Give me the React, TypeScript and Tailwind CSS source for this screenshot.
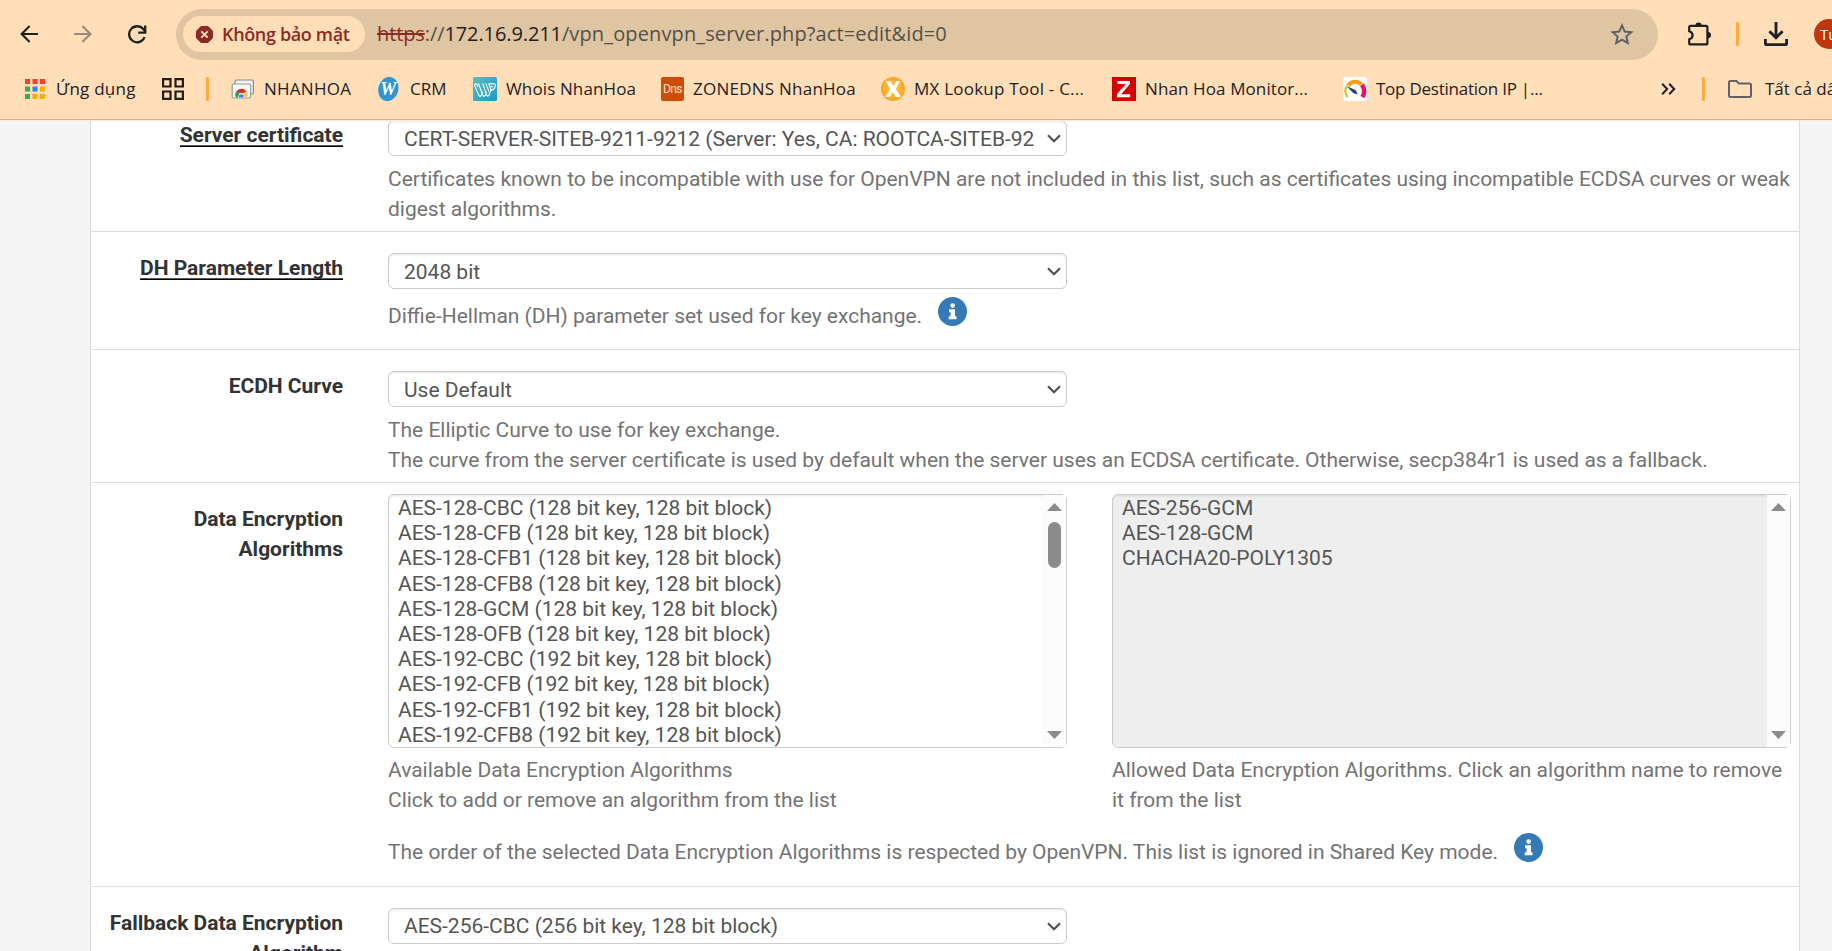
import type { ReactNode } from "react";

const ALGORITHMS = [
  "AES-128-CBC (128 bit key, 128 bit block)",
  "AES-128-CFB (128 bit key, 128 bit block)",
  "AES-128-CFB1 (128 bit key, 128 bit block)",
  "AES-128-CFB8 (128 bit key, 128 bit block)",
  "AES-128-GCM (128 bit key, 128 bit block)",
  "AES-128-OFB (128 bit key, 128 bit block)",
  "AES-192-CBC (192 bit key, 128 bit block)",
  "AES-192-CFB (192 bit key, 128 bit block)",
  "AES-192-CFB1 (192 bit key, 128 bit block)",
  "AES-192-CFB8 (192 bit key, 128 bit block)",
];

const ALLOWED = ["AES-256-GCM", "AES-128-GCM", "CHACHA20-POLY1305"];

/* ---------- toolbar icons ---------- */

function BackIcon() {
  return (
    <svg className="h-[18px] w-[18px] shrink-0" viewBox="0 0 18 18" fill="none" stroke="#1f1f1f" strokeWidth="2.1">
      <path d="M18 9H1.8M9.6 1L1.6 9l8 8" />
    </svg>
  );
}

function ForwardIcon() {
  return (
    <svg className="h-[18px] w-[18px] shrink-0" viewBox="0 0 18 18" fill="none" stroke="#9a8a75" strokeWidth="2.1">
      <path d="M0 9h16.2M8.4 1l8 8-8 8" />
    </svg>
  );
}

function ReloadIcon() {
  return (
    <svg className="h-[19px] w-[19px] shrink-0" viewBox="0 0 19 19" fill="none" stroke="#1f1f1f" strokeWidth="2.3">
      <path d="M16.6 12.2A8 8 0 1 1 15.2 4l2 2.4" />
      <path d="M17.2 .6v7h-7" />
    </svg>
  );
}

function DangerIcon() {
  return (
    <svg className="h-[17px] w-[17px] shrink-0" viewBox="0 0 17 17">
      <path d="M5 0h7l5 5v7l-5 5H5l-5-5V5z" fill="#8c2a25" />
      <path d="M5.3 5.3l6.4 6.4M11.7 5.3l-6.4 6.4" stroke="#ffdeb8" strokeWidth="1.8" />
    </svg>
  );
}

function StarIcon() {
  return (
    <svg className="h-[22px] w-[24px] shrink-0" viewBox="0 0 24 22" fill="none" stroke="#5f6064" strokeWidth="2">
      <path d="M12 2.4l2.7 6.2 6.6.6-5 4.4 1.5 6.4-5.8-3.4-5.8 3.4 1.5-6.4-5-4.4 6.6-.6z" />
    </svg>
  );
}

function PuzzleIcon() {
  return (
    <svg className="h-[25px] w-[26px] shrink-0" viewBox="0 0 26 25">
      <path
        d="M4.700 3.800h15.200q1.500 0 1.500 1.500v15.600q0 1.500-1.500 1.500H4.700q-1.500 0-1.500-1.500v-3.500q3.400-1 3.400-4.100t-3.400-4.100v-3.900q0-1.500 1.500-1.500z"
        fill="none"
        stroke="#1f1f1f"
        strokeWidth="2.200"
      />
      <path d="M9.300 3.600a3.200 3.200 0 0 1 6.400 0zM21.800 9.900a3.200 3.200 0 0 1 0 6.400z" fill="#1f1f1f" />
    </svg>
  );
}

function DownloadIcon() {
  return (
    <svg className="h-[24px] w-[24px] shrink-0" viewBox="0 0 24 24" fill="none" stroke="#1f2023" strokeWidth="2.8">
      <path d="M12 0v15.500M5.400 9.200l6.600 6.600 6.600-6.600" />
      <path d="M1.400 17v4.200q0 1.400 1.400 1.400h18.400q1.400 0 1.400-1.400V17" />
    </svg>
  );
}

function Separator() {
  return <div className="h-6 w-[3px] shrink-0 rounded-[1px] bg-[#ffab40]" />;
}

/* ---------- bookmark icons ---------- */

function AppsIcon() {
  return (
    <svg className="h-5 w-5 shrink-0" viewBox="0 0 20 20">
      <path d="M0 0h5v5H0zM7.500 0h5v5h-5zM15 0h5v5h-5z" fill="#f6402f" />
      <path d="M0 7.500h5v5H0zM0 15h5v5H0z" fill="#3aa757" />
      <path d="M7.500 7.500h5v5h-5z" fill="#1e88f5" />
      <path d="M15 7.500h5v5h-5zM7.500 15h5v5h-5zM15 15h5v5h-5z" fill="#f9ab00" />
    </svg>
  );
}

function GridIcon() {
  return (
    <svg className="h-[22px] w-[22px] shrink-0" viewBox="0 0 22 22" fill="none" stroke="#1f1f1f" strokeWidth="2.200">
      <path d="M1.100 1.100h7.400v7.400H1.100zM13.500 1.100h7.400v7.400h-7.400zM1.100 13.500h7.400v7.400H1.100zM13.500 13.500h7.400v7.400h-7.400z" />
    </svg>
  );
}

function NhanHoaIcon() {
  return (
    <svg className="h-6 w-6 shrink-0" viewBox="0 0 24 24">
      <rect x="4" y="3" width="18.400" height="14" rx="1.500" fill="#f1f1f1" stroke="#8a8a8a" strokeWidth="1.200" />
      <rect x="1.200" y="7" width="18.400" height="14" rx="1.500" fill="#f7f7f7" stroke="#9a9a9a" strokeWidth="1.200" />
      <path d="M4.900 20.600a5.600 5.600 0 0 1 1.600-7l2.800 5.200v1.800z" fill="#2f9e4f" />
      <path d="M5.400 14.700a6 6 0 0 1 10.200-.2L10.400 17z" fill="#d93025" />
      <path d="M10.400 16h5.800a6 6 0 0 1 0 4.600h-4z" fill="#fbc530" />
      <path d="M7.400 20.600a3.200 3.200 0 1 1 6 0z" fill="#fff" />
      <path d="M8.200 20.600a2.400 2.400 0 1 1 4.400 0z" fill="#3b82f0" />
    </svg>
  );
}

function CrmIcon() {
  return (
    <svg className="h-6 w-6 shrink-0" viewBox="0 0 24 24">
      <ellipse cx="11.300" cy="12" rx="10" ry="12.200" transform="rotate(14 11.300 12)" fill="#3096ce" />
      <text
        x="11.300"
        y="17.800"
        textAnchor="middle"
        fontFamily="Liberation Serif, serif"
        fontStyle="italic"
        fontWeight="700"
        fontSize="18"
        fill="#fff"
      >
        W
      </text>
    </svg>
  );
}

function WhoisIcon() {
  return (
    <svg className="h-6 w-6 shrink-0" viewBox="0 0 24 24">
      <defs>
        <linearGradient id="whois" x1="0" y1="0" x2="1" y2="1">
          <stop offset="0" stopColor="#55c0ba" />
          <stop offset="0.500" stopColor="#37acc8" />
          <stop offset="1" stopColor="#1c9ac6" />
        </linearGradient>
      </defs>
      <rect width="24" height="24" rx="1.500" fill="url(#whois)" />
      <g fill="none" stroke="#fff" strokeWidth="1.150" strokeLinejoin="round" strokeLinecap="round">
        <path d="M4.800 9.400Q4 6.800 2.600 6.800T1.600 8.400l4.200 10q1.200 2 2.400 0l1.200-3.400" />
        <path d="M5.400 6.800l4.600 11.600q1 1.800 2.200 0l1.200-3.200M9.800 6.800l3.800 11.200q1.200 2.200 2.400 0l1.800-4.600" />
        <path d="M13 6.800l2.800 7.400M15.800 6.800h5.400q1.600.4 1 2.600-.8 3.400-4 4l-2.400-6.600M18.200 9.600h1.600" />
      </g>
    </svg>
  );
}

function DnsIcon() {
  return (
    <div className="flex h-6 w-[23px] shrink-0 items-center justify-center rounded-[2px] bg-[#d04c05] font-['Roboto',sans-serif] text-[12px] tracking-[-0.6px] text-[#ffe5d2]">
      Dns
    </div>
  );
}

function MxIcon() {
  return (
    <svg className="h-6 w-6 shrink-0" viewBox="0 0 24 24">
      <defs>
        <radialGradient id="mx">
          <stop offset="0.300" stopColor="#ffc050" />
          <stop offset="1" stopColor="#fca31c" />
        </radialGradient>
      </defs>
      <circle cx="12" cy="12" r="12" fill="url(#mx)" />
      <path d="M4.500 4h4.800l3 5 3-5H19.500l-4.900 8L20 20h-5l-3.200-5.300L8.600 20H4.200l5.300-8z" fill="#fff" />
    </svg>
  );
}

function ZabbixIcon() {
  return (
    <svg className="h-6 w-6 shrink-0" viewBox="0 0 24 24">
      <rect width="24" height="24" fill="#d40000" />
      <path d="M5.500 4H18v3L9.200 17.200h9v3H5V17l8.800-10H5.500z" fill="#fff" />
    </svg>
  );
}

function GaugeIcon() {
  return (
    <svg className="h-6 w-6 shrink-0" viewBox="0 0 24 24" fill="none">
      <rect width="24" height="24" rx="3" fill="#fff" />
      <path d="M4.600 20.200C1.800 16.500 1.800 12 4.200 8.600" stroke="#b2d235" strokeWidth="2.200" />
      <path d="M5 8.800C8 4 15 3.400 18.500 7.600" stroke="#f99d1c" strokeWidth="4" />
      <path d="M19 7.800c2.600 3.800 2.600 8.600.4 12.400" stroke="#ed1063" strokeWidth="4.600" />
      <path d="M5 10.200l7.400 3.200 1.800 3.600-4-1.400z" fill="#1f3a63" stroke="#1f3a63" strokeWidth=".8" />
    </svg>
  );
}

function ChevronsIcon() {
  return (
    <svg className="h-3 w-[15px] shrink-0" viewBox="0 0 15 12" fill="none" stroke="#1f1f1f" strokeWidth="2">
      <path d="M1.200.8L6.200 6l-5 5.200M8.200.8l5 5.200-5 5.200" />
    </svg>
  );
}

function FolderIcon() {
  return (
    <svg className="h-[18px] w-6 shrink-0" viewBox="0 0 24 18" fill="none" stroke="#606166" strokeWidth="2">
      <path d="M1 2.500Q1 1 2.500 1h6l2.600 2.600h10.400q1.500 0 1.500 1.500v10.400q0 1.500-1.500 1.500h-19Q1 17 1 15.500z" />
    </svg>
  );
}

function Bookmark({ icon, label, className }: { icon: ReactNode; label: string; className: string }) {
  return (
    <div className={`flex shrink-0 items-center whitespace-nowrap ${className}`}>
      {icon}
      <span>{label}</span>
    </div>
  );
}

function BrowserChrome() {
  return (
    <header className="h-[121px] w-full shrink-0 overflow-hidden border-b border-[#ffe9cf] bg-[#ffdeb8] font-['Open_Sans','Noto_Sans',sans-serif] text-[#1f2023]">
      <div className="flex h-[119px] flex-col">
        <div className="flex h-[68px] items-center pl-5">
          <BackIcon />
          <div className="w-9 shrink-0" />
          <ForwardIcon />
          <div className="w-9 shrink-0" />
          <ReloadIcon />
          <div className="ml-[29px] flex h-[51px] w-[1482px] shrink-0 items-center rounded-full bg-[#dfc5a1] pl-[7px]">
            <div className="flex h-9 w-[182px] shrink-0 items-center gap-[9px] rounded-full bg-[#ffdeb8] pl-[13px]">
              <DangerIcon />
              <span className="text-[18px] font-semibold tracking-[-0.350px] whitespace-nowrap text-[#8c2a25]">
                Không bảo mật
              </span>
            </div>
            <div className="ml-3 flex-1 text-[20px] tracking-[-0.1px] whitespace-nowrap text-[#54504a]">
              <span className="text-[#8c2a25] line-through">https</span>://
              <span className="text-[#1f2023]">172.16.9.211</span>
              <span className="tracking-[0.130px]">/vpn_openvpn_server.php?act=edit&amp;id=0</span>
            </div>
            <div className="mr-6 flex">
              <StarIcon />
            </div>
          </div>
          <div className="ml-7 flex">
            <PuzzleIcon />
          </div>
          <div className="ml-6 flex">
            <Separator />
          </div>
          <div className="ml-[25px] flex">
            <DownloadIcon />
          </div>
          <div className="ml-[26px] flex h-[30px] w-[30px] shrink-0 items-center rounded-full bg-[#bf360c] pl-[6px] text-[15px] text-white">
            Tu
          </div>
        </div>
        <div className="flex h-[42px] items-center pl-[25px] text-[17px]">
          <Bookmark icon={<AppsIcon />} label="Ứng dụng" className="w-[137px] gap-[11px] tracking-[0.250px]" />
          <div className="flex w-11 shrink-0">
            <GridIcon />
          </div>
          <div className="flex w-[25px] shrink-0">
            <Separator />
          </div>
          <Bookmark icon={<NhanHoaIcon />} label="NHANHOA" className="w-[146px] gap-[9px] tracking-[0.250px]" />
          <Bookmark icon={<CrmIcon />} label="CRM" className="w-24 gap-[9px]" />
          <Bookmark icon={<WhoisIcon />} label="Whois NhanHoa" className="w-[188px] gap-[9px] tracking-[0.130px]" />
          <Bookmark icon={<DnsIcon />} label="ZONEDNS NhanHoa" className="w-[220px] gap-[9px] tracking-[0.240px]" />
          <Bookmark icon={<MxIcon />} label="MX Lookup Tool - C..." className="w-[231px] gap-[9px] tracking-[0.220px]" />
          <Bookmark icon={<ZabbixIcon />} label="Nhan Hoa Monitor..." className="w-[231px] gap-[9px] tracking-[0.110px]" />
          <Bookmark icon={<GaugeIcon />} label="Top Destination IP |..." className="w-[318px] gap-[9px] tracking-[-0.240px]" />
          <div className="flex w-[41px] shrink-0">
            <ChevronsIcon />
          </div>
          <div className="flex w-[26px] shrink-0">
            <Separator />
          </div>
          <Bookmark icon={<FolderIcon />} label="Tất cả dấu trang" className="gap-[13px]" />
        </div>
      </div>
      <div className="h-px bg-[#d2b48f]" />
    </header>
  );
}

/* ---------- form ---------- */

function Row({ label, underlined, className, labelClassName, children }: {
  label: string;
  underlined?: boolean;
  className: string;
  labelClassName: string;
  children: ReactNode;
}) {
  return (
    <div className={`flex shrink-0 border-b border-[#dedede] ${className}`}>
      <div className={`w-[252px] shrink-0 text-right font-bold text-[#333] ${labelClassName}`}>
        {underlined ? (
          <span className="inline-block h-[27px] border-b border-black shadow-[inset_0_-1px_0_#555]">{label}</span>
        ) : (
          label
        )}
      </div>
      <div className="ml-[45px] flex w-[1411px] flex-col items-start">{children}</div>
    </div>
  );
}

function SelectBox({ value, textClassName = "pt-[2px]" }: { value: string; textClassName?: string }) {
  return (
    <div className="flex h-9 w-[679px] shrink-0 items-center justify-between rounded-[6px] border border-[#ccc] bg-white pr-[5px] pl-[15px] text-[#555] shadow-[inset_0_1.500px_1.500px_rgba(0,0,0,0.075)]">
      <span className={`w-[634px] overflow-hidden whitespace-nowrap ${textClassName}`}>{value}</span>
      <svg className="h-[9px] w-[14px] shrink-0" viewBox="0 0 14 9" fill="none" stroke="#505050" strokeWidth="2.200">
        <path d="M1 1.200l6 6 6-6" />
      </svg>
    </div>
  );
}

function ListBox({ options, disabled, thumb }: { options: string[]; disabled?: boolean; thumb?: boolean }) {
  return (
    <div
      className={`flex h-[254px] w-[679px] shrink-0 rounded-[6px] border border-[#ccc] text-[#555] ${disabled ? "bg-[#eee]" : "bg-white"}`}
    >
      <div className="h-[252px] flex-1 overflow-hidden rounded-l-[5px] pt-px pl-[9px] shadow-[inset_0_1.500px_1.500px_rgba(0,0,0,0.075)]">
        {options.map((o) => (
          <div key={o} className="h-[25.200px] leading-[25.200px] whitespace-nowrap">
            {o}
          </div>
        ))}
      </div>
      <div className="flex w-[23px] flex-col items-center bg-[#fcfcfc] pt-2 pb-2">
        <svg className="h-2 w-[15px] shrink-0" viewBox="0 0 15 8" fill="#8b8b8b">
          <path d="M7.500 0L15 8H0z" />
        </svg>
        {thumb && <div className="mt-[11px] h-[46px] w-[13px] rounded-full bg-[#8b8b8b]" />}
        <svg className="mt-auto h-2 w-[15px] shrink-0" viewBox="0 0 15 8" fill="#8b8b8b">
          <path d="M0 0h15L7.500 8z" />
        </svg>
      </div>
    </div>
  );
}

function InfoIcon() {
  return (
    <svg className="h-[29px] w-[29px] shrink-0" viewBox="0 0 29 29">
      <circle cx="14.500" cy="14.500" r="14.500" fill="#337ab7" />
      <path d="M11 12.200h6v7h1.500v3h-7.800v-3h1.900v-4H11z" fill="#fff" />
      <circle cx="14.600" cy="8.600" r="2.300" fill="#fff" />
    </svg>
  );
}

function Help({ children, className = "" }: { children: ReactNode; className?: string }) {
  return <div className={`text-[#737373] ${className}`}>{children}</div>;
}

export default function App() {
  return (
    <div className="flex h-[951px] w-[1832px] flex-col overflow-hidden bg-[#f4f4f4]">
      <BrowserChrome />
      <main className="ml-[90px] flex h-[830px] w-[1710px] flex-col overflow-hidden border-x border-[#dcdcdc] bg-white font-['Roboto',sans-serif] text-[21px] leading-[30px] tracking-[-0.010px] [font-feature-settings:'liga']">
        <Row label="Server certificate" underlined className="h-[111px]" labelClassName="-mt-px">
          <div className="-mt-px flex">
            <SelectBox value="CERT-SERVER-SITEB-9211-9212 (Server: Yes, CA: ROOTCA-SITEB-92" />
          </div>
          <Help className="mt-2">
            Certificates known to be incompatible with use for OpenVPN are not included in this list, such as
            certificates using incompatible ECDSA curves or weak digest algorithms.
          </Help>
        </Row>

        <Row label="DH Parameter Length" underlined className="h-[118px] pt-[21px]" labelClassName="">
          <SelectBox value="2048 bit" />
          <Help className="mt-2 flex items-start gap-4">
            <span className="mt-[4px]">Diffie-Hellman (DH) parameter set used for key exchange.</span>
            <InfoIcon />
          </Help>
        </Row>

        <Row label="ECDH Curve" className="h-[133px] pt-[21px]" labelClassName="">
          <SelectBox value="Use Default" />
          <Help className="mt-2">
            The Elliptic Curve to use for key exchange.
            <br />
            The curve from the server certificate is used by default when the server uses an ECDSA certificate.
            Otherwise, secp384r1 is used as a fallback.
          </Help>
        </Row>

        <Row label="Data Encryption Algorithms" className="h-[404px] pt-[11px]" labelClassName="pt-[10px] pl-[80px]">
          <div className="flex gap-[45px]">
            <div className="w-[679px]">
              <ListBox options={ALGORITHMS} thumb />
              <Help className="mt-[7px]">
                Available Data Encryption Algorithms
                <br />
                Click to add or remove an algorithm from the list
              </Help>
            </div>
            <div className="w-[679px]">
              <ListBox options={ALLOWED} disabled />
              <Help className="mt-[7px]">
                Allowed Data Encryption Algorithms. Click an algorithm name to remove it from the list
              </Help>
            </div>
          </div>
          <Help className="mt-[18px] flex items-start gap-4">
            <span className="mt-[4px] whitespace-nowrap">
              The order of the selected Data Encryption Algorithms is respected by OpenVPN. This list is ignored in
              Shared Key mode.
            </span>
            <InfoIcon />
          </Help>
        </Row>

        <Row label="Fallback Data Encryption Algorithm" className="h-[160px] pt-[21px]" labelClassName="">
          <SelectBox value="AES-256-CBC (256 bit key, 128 bit block)" textClassName="" />
        </Row>
      </main>
    </div>
  );
}
